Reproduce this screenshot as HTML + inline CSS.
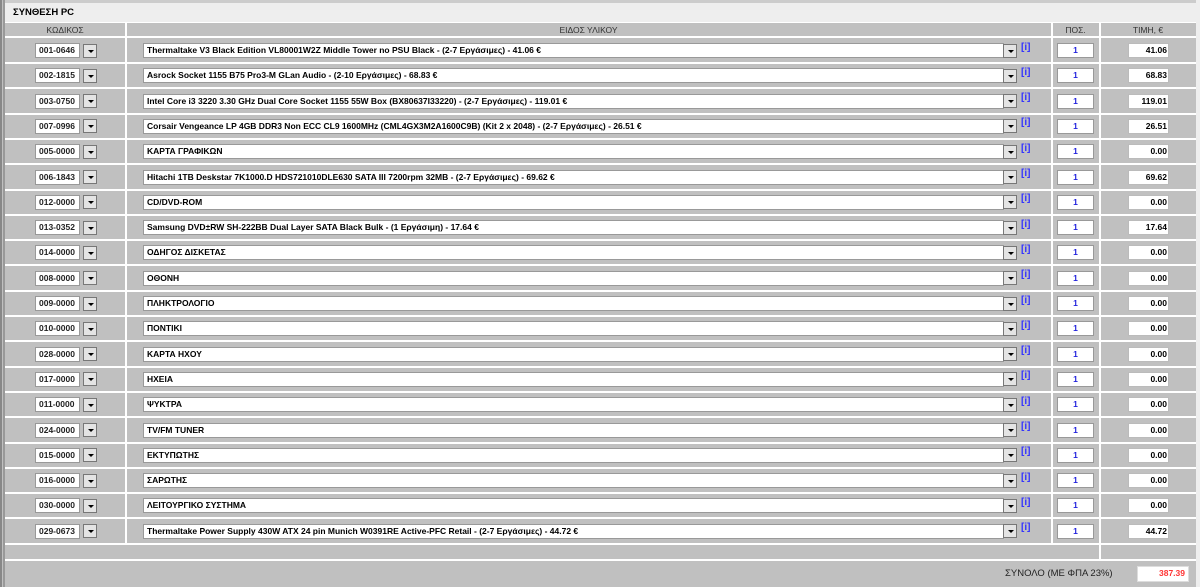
<!DOCTYPE html>
<html><head><meta charset="utf-8"><style>
body{margin:0;width:1200px;height:587px;background:#c0c0c0;font-family:"Liberation Sans","DejaVu Sans",sans-serif;position:relative;overflow:hidden}
.a{position:absolute}
.lb{left:0;top:0;width:2px;height:587px;background:#888}
.lb2{left:3px;top:0;width:2px;height:587px;background:#999}
.title{left:5px;top:0;width:1191px;height:22px;background:#eeeeee;border-top:3px solid #ccc;box-sizing:border-box;font-size:9.5px;font-weight:bold;padding:4px 0 0 8px;color:#000}
.hl{background:#fff}
.hdr{font-size:8.5px;color:#333;text-align:center;top:25px}
.box{background:#fff;border:1px solid #999;box-sizing:border-box;font-size:8.5px;font-weight:bold;line-height:13px;white-space:nowrap;overflow:hidden}
.btn{background:#e4e4e4;border:1px solid #777;box-sizing:border-box}
.btn:after{content:"";position:absolute;left:4px;top:5px;border-left:3px solid transparent;border-right:3px solid transparent;border-top:3px solid #000}
.i{color:#3333ff;font-size:10px;font-weight:bold}
</style></head><body>
<div class="a lb"></div><div class="a lb2"></div>
<div class="a title">ΣΥΝΘΕΣΗ PC</div>
<div class="a hl" style="left:5px;top:22px;width:1191px;height:1px"></div>
<div class="a hl" style="left:1196px;top:0;width:4px;height:587px;background:#eee"></div>
<div class="a hdr" style="left:5px;width:120px">ΚΩΔΙΚΟΣ</div>
<div class="a hdr" style="left:126px;width:925px">ΕΙΔΟΣ ΥΛΙΚΟΥ</div>
<div class="a hdr" style="left:1052px;width:47px">ΠΟΣ.</div>
<div class="a hdr" style="left:1100px;width:96px">ΤΙΜΗ, €</div>
<div id="g"></div>
<script>
var R=[["001-0646","Thermaltake V3 Black Edition VL80001W2Z Middle Tower no PSU Black - (2-7 Εργάσιμες) - 41.06 €","41.06"],
["002-1815","Asrock Socket 1155 B75 Pro3-M GLan Audio - (2-10 Εργάσιμες) - 68.83 €","68.83"],
["003-0750","Intel Core i3 3220 3.30 GHz Dual Core Socket 1155 55W Box (BX80637I33220) - (2-7 Εργάσιμες) - 119.01 €","119.01"],
["007-0996","Corsair Vengeance LP 4GB DDR3 Non ECC CL9 1600MHz (CML4GX3M2A1600C9B) (Kit 2 x 2048) - (2-7 Εργάσιμες) - 26.51 €","26.51"],
["005-0000","ΚΑΡΤΑ ΓΡΑΦΙΚΩΝ","0.00"],
["006-1843","Hitachi 1TB Deskstar 7K1000.D HDS721010DLE630 SATA III 7200rpm 32MB - (2-7 Εργάσιμες) - 69.62 €","69.62"],
["012-0000","CD/DVD-ROM","0.00"],
["013-0352","Samsung DVD±RW SH-222BB Dual Layer SATA Black Bulk - (1 Εργάσιμη) - 17.64 €","17.64"],
["014-0000","ΟΔΗΓΟΣ ΔΙΣΚΕΤΑΣ","0.00"],["008-0000","ΟΘΟΝΗ","0.00"],["009-0000","ΠΛΗΚΤΡΟΛΟΓΙΟ","0.00"],
["010-0000","ΠΟΝΤΙΚΙ","0.00"],["028-0000","ΚΑΡΤΑ ΗΧΟΥ","0.00"],["017-0000","ΗΧΕΙΑ","0.00"],
["011-0000","ΨΥΚΤΡΑ","0.00"],["024-0000","TV/FM TUNER","0.00"],["015-0000","ΕΚΤΥΠΩΤΗΣ","0.00"],
["016-0000","ΣΑΡΩΤΗΣ","0.00"],["030-0000","ΛΕΙΤΟΥΡΓΙΚΟ ΣΥΣΤΗΜΑ","0.00"],
["029-0673","Thermaltake Power Supply 430W ATX 24 pin Munich W0391RE Active-PFC Retail - (2-7 Εργάσιμες) - 44.72 €","44.72"]];
var h='';
function line(y){h+='<div class="a hl" style="left:5px;top:'+y+'px;width:1191px;height:2px"></div>';}
line(36);
for(var k=0;k<20;k++){var y=38+k*25.3,c=y+12.5;
h+='<div class="a box" style="left:35px;top:'+(c-7.5)+'px;width:45px;height:15px;padding-left:3px;color:#222">'+R[k][0]+'</div>';
h+='<div class="a btn" style="left:83px;top:'+(c-7)+'px;width:14px;height:14px"></div>';
h+='<div class="a box" style="left:143px;top:'+(c-7.5)+'px;width:861px;height:15px;padding-left:3px;color:#000">'+R[k][1]+'</div>';
h+='<div class="a btn" style="left:1003px;top:'+(c-7)+'px;width:14px;height:14px"></div>';
h+='<div class="a i" style="left:1021px;top:'+(c-9)+'px">[i]</div>';
h+='<div class="a box" style="left:1057px;top:'+(c-7.5)+'px;width:37px;height:15px;text-align:center;color:#22d">1</div>';
h+='<div class="a box" style="left:1128px;top:'+(c-7.5)+'px;width:41px;height:15px;text-align:right;padding-right:1px;color:#000;border-color:#bbb">'+R[k][2]+'</div>';
line(Math.round(y+24));}
line(559);
h+='<div class="a hl" style="left:125px;top:22px;width:2px;height:522px"></div>';
h+='<div class="a hl" style="left:1051px;top:22px;width:2px;height:522px"></div>';
h+='<div class="a hl" style="left:1099px;top:22px;width:2px;height:538px"></div>';
document.getElementById('g').innerHTML=h;
</script>
<div class="a" style="left:1005px;top:568px;font-size:9.5px;color:#222">ΣΥΝΟΛΟ (ΜΕ ΦΠΑ 23%)</div>
<div class="a box" style="left:1137px;top:566px;width:52px;height:16px;text-align:right;padding-right:3px;color:#f33;border-color:#ddd">387.39</div>
</body></html>
